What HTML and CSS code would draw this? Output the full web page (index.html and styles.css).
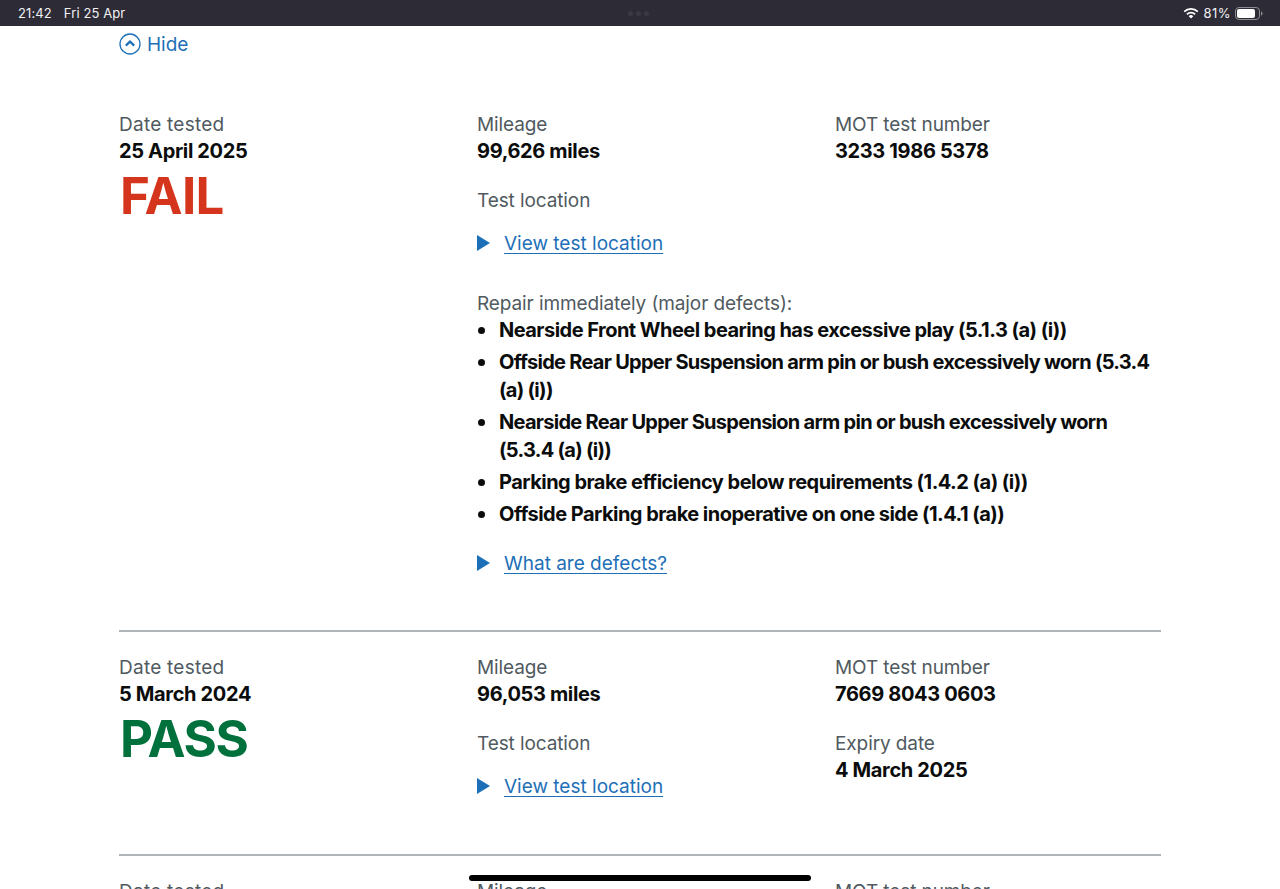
FILE: index.html
```html
<!DOCTYPE html>
<html lang="en">
<head>
<meta charset="utf-8">
<title>MOT history</title>
<link rel="stylesheet" href="styles.css">
</head>
<body>
<header class="status">
  <div class="status-left"><span>21:42</span><span>Fri 25 Apr</span></div>
  <div class="dots"><i></i><i></i><i></i></div>
  <div class="status-right">
    <svg class="wifi" width="16" height="12" viewBox="0 0 16 12"><path d="M8 11.6 5.7 9.2a3.3 3.3 0 0 1 4.6 0z" fill="#fff"/><path d="M3.9 7.3a5.9 5.9 0 0 1 8.2 0" fill="none" stroke="#fff" stroke-width="1.7"/><path d="M1.2 4.6a9.7 9.7 0 0 1 13.6 0" fill="none" stroke="#fff" stroke-width="1.7"/></svg>
    <span>81%</span>
    <svg class="battery" width="28" height="13" viewBox="0 0 28 13"><rect x=".5" y=".5" width="24" height="12" rx="3.5" fill="none" stroke="#8d8d92"/><rect x="2" y="2" width="18" height="9" rx="2" fill="#fff"/><path d="M26 4.500c1 .3 1.500 1 1.500 2s-.5 1.700-1.500 2z" fill="#8d8d92"/></svg>
  </div>
</header>
<main class="page">
  <a class="hide" href="#">
    <svg width="22" height="22" viewBox="0 0 22 22"><circle cx="11" cy="11" r="10" fill="none" stroke="#1d70b8" stroke-width="1.300"/><path d="M6.800 12.600 11 8.600l4.200 4" fill="none" stroke="#1d70b8" stroke-width="2.200"/></svg>
    <span>Hide</span>
  </a>

  <section class="record first">
    <div class="col">
      <div class="label date-label">Date tested</div>
      <div class="value">25 April 2025</div>
      <div class="result fail">FAIL</div>
    </div>
    <div class="col">
      <div class="label">Mileage</div>
      <div class="value">99,626 miles</div>
    </div>
    <div class="col">
      <div class="label">MOT test number</div>
      <div class="value">3233 1986 5378</div>
    </div>
    <div class="wide">
      <div class="label">Test location</div>
      <a class="details" href="#"><b></b><span>View test location</span></a>
      <div class="label defects-title">Repair immediately (major defects):</div>
      <ul class="defects">
        <li>Nearside Front Wheel bearing has excessive play (5.1.3 (a) (i))</li>
        <li class="long">Offside Rear Upper Suspension arm pin or bush excessively worn (5.3.4 (a) (i))</li>
        <li class="long">Nearside Rear Upper Suspension arm pin or bush excessively worn (5.3.4 (a) (i))</li>
        <li>Parking brake efficiency below requirements (1.4.2 (a) (i))</li>
        <li>Offside Parking brake inoperative on one side (1.4.1 (a))</li>
      </ul>
      <a class="details" href="#"><b></b><span>What are defects?</span></a>
    </div>
  </section>

  <section class="record second">
    <div class="col">
      <div class="label date-label">Date tested</div>
      <div class="value">5 March 2024</div>
      <div class="result pass">PASS</div>
    </div>
    <div class="col">
      <div class="label">Mileage</div>
      <div class="value">96,053 miles</div>
      <div class="label next">Test location</div>
      <a class="details" href="#"><b></b><span>View test location</span></a>
    </div>
    <div class="col">
      <div class="label">MOT test number</div>
      <div class="value">7669 8043 0603</div>
      <div class="label next">Expiry date</div>
      <div class="value">4 March 2025</div>
    </div>
  </section>

  <section class="record third">
    <div class="col"><div class="label date-label">Date tested</div></div>
    <div class="col"><div class="label">Mileage</div></div>
    <div class="col"><div class="label">MOT test number</div></div>
  </section>
</main>
<div class="home-bar"></div>
</body>
</html>
```

FILE: styles.css
```css
* { box-sizing: border-box; }
html, body { margin: 0; height: 889px; overflow: hidden; background: #fff; }
body { font-family: "Inter", "Liberation Sans", sans-serif; color: #0b0c0c; position: relative; }

.status { height: 26px; background: #2c2b36; color: #f2f2f4; display: flex; align-items: center; justify-content: space-between; padding: 0 17px 0 18px; font-size: 13px; position: relative; }
.status-left { display: flex; gap: 12px; letter-spacing: .1px; }
.status-right { display: flex; align-items: center; gap: 4px; letter-spacing: .5px; }
.dots { position: absolute; left: 628px; top: 11px; display: flex; gap: 3px; }
.dots i { width: 5px; height: 5px; border-radius: 50%; background: #3b3a44; }
.wifi, .battery { display: block; }

.page { padding: 0 119px; }
.hide { display: flex; align-items: center; gap: 6px; height: 36px; color: #1d70b8; text-decoration: none; font-size: 19px; }

.record { display: grid; grid-template-columns: 358px 358px 1fr; }
.record.first { padding-top: 49px; height: 570px; border-bottom: 2px solid #b1b4b6; grid-template-rows: 76px auto; }
.record.first .col:first-child { grid-row: 1 / 3; }
.wide { grid-column: 2 / 4; }
.record.second { padding-top: 22px; height: 224px; border-bottom: 2px solid #b1b4b6; }
.record.third { padding-top: 22px; }

.label { color: #505a5f; font-size: 19px; line-height: 27px; letter-spacing: -.1px; }
.date-label { letter-spacing: .25px; }
.value { font-size: 20px; font-weight: 700; line-height: 27px; letter-spacing: -.35px; }
.next { margin-top: 22px; }

.result { font-size: 51px; font-weight: 700; line-height: 60px; margin-top: 1px; padding-left: 1px; }
.fail { color: #d4351c; letter-spacing: -.7px; }
.pass { color: #00703c; letter-spacing: -1.300px; }

.details { display: flex; align-items: center; color: #1d70b8; font-size: 19px; line-height: 27px; text-decoration: none; margin-top: 16px; }
.details b { width: 0; height: 0; border-left: 13px solid #1d70b8; border-top: 8px solid transparent; border-bottom: 8px solid transparent; margin: -2px 14px 0 0; }
.details span { text-decoration: underline; text-underline-offset: 3px; text-decoration-thickness: 1px; }

.defects-title { margin-top: 33px; }
.defects { list-style: none; margin: -1px 0 22px; padding: 0; font-size: 20px; font-weight: 700; line-height: 28px; letter-spacing: -.53px; }
.defects li { position: relative; padding-left: 22px; margin-bottom: 4px; }
.defects li.long { letter-spacing: -.72px; }
.defects li::before { content: ""; position: absolute; left: 1px; top: 11px; width: 7px; height: 7px; border-radius: 50%; background: #0b0c0c; }

.home-bar { position: absolute; left: 469px; top: 875px; width: 342px; height: 6px; border-radius: 3px; background: #000; }
```
